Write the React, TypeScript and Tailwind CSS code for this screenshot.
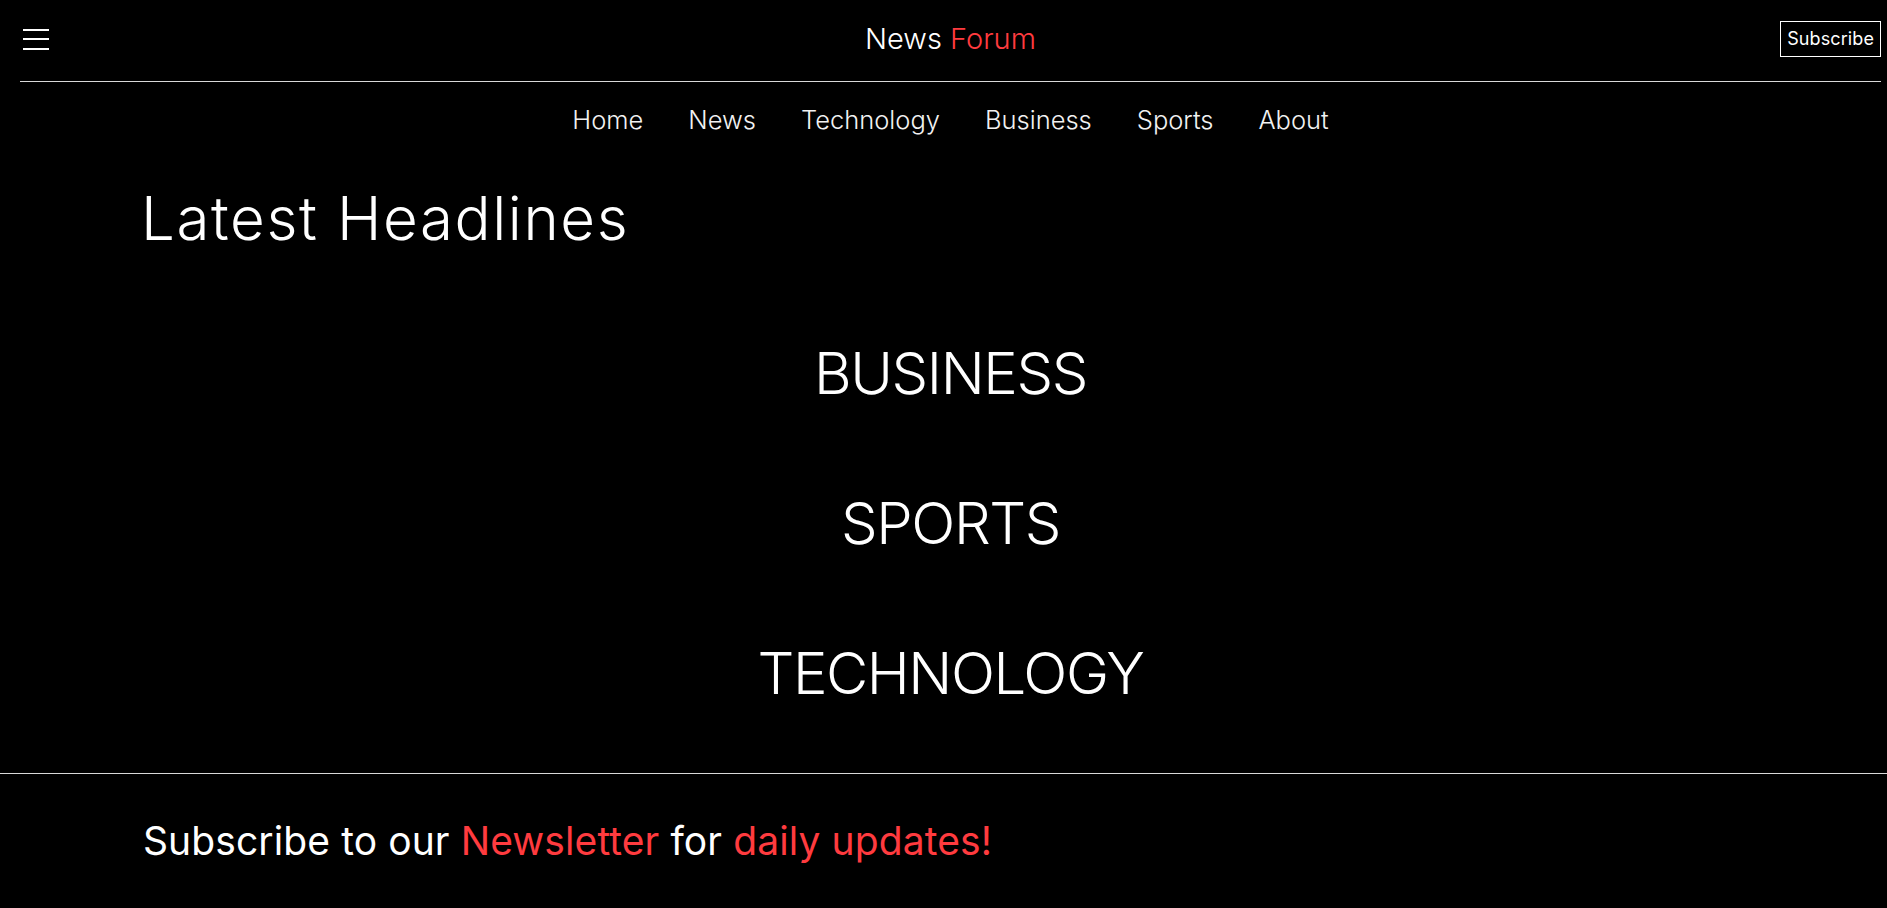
import React from "react";

const navLinks = ["Home", "News", "Technology", "Business", "Sports", "About"];
const categories = ["BUSINESS", "SPORTS", "TECHNOLOGY"];

function MenuIcon() {
  return (
    <svg width="26" height="22" viewBox="0 0 26 22" className="block">
      <rect x="0" y="0" width="26" height="2" fill="#ffffff" />
      <rect x="0" y="9" width="26" height="2" fill="#ffffff" />
      <rect x="0" y="19" width="26" height="2" fill="#ffffff" />
    </svg>
  );
}

export default function App() {
  return (
    <div className="min-h-[908px] w-full overflow-hidden bg-black text-white font-['Inter','Liberation_Sans',sans-serif]">
      <div className="ml-[20px] w-[1861px]">
        <header className="relative flex h-[82px] items-center justify-center border-b border-[#d9d9d9] pb-[4px]">
          <button className="absolute left-[3px] top-[29px]">
            <MenuIcon />
          </button>
          <h1 className="text-[29px] font-light leading-[36px]">
            News <span className="text-[#ff3b3f]">Forum</span>
          </h1>
          <button className="absolute right-0 top-[21px] h-[36px] border border-white px-[6px] text-[18px] leading-[34px] tracking-[0.1px]">
            Subscribe
          </button>
        </header>

        <nav className="flex justify-center gap-[45px] pt-[20px]">
          {navLinks.map((link) => (
            <a key={link} href="#" className="text-[25.5px] font-light leading-[36px] text-[#f2f2f2]">
              {link}
            </a>
          ))}
        </nav>
      </div>

      <main className="pl-[141px] pt-[44px]">
        <h2 className="text-[60px] font-light leading-[72px] tracking-[1.6px]">Latest Headlines</h2>
      </main>

      <section className="ml-[20px] mt-[44px] w-[1861px] pb-[25px]">
        {categories.map((cat) => (
          <div key={cat} className="flex h-[150px] items-center justify-center">
            <span className="text-[58px] font-light leading-[72px] tracking-[-1.4px]">{cat}</span>
          </div>
        ))}
      </section>

      <footer className="border-t border-[#d9d9d9] pl-[143px] pt-[43px] pb-[40px]">
        <p className="text-[39px] leading-[48px] tracking-[0.1px]">
          Subscribe to our <span className="text-[#ff3b3f]">Newsletter</span> for{" "}
          <span className="text-[#ff3b3f]">daily updates!</span>
        </p>
      </footer>
    </div>
  );
}
